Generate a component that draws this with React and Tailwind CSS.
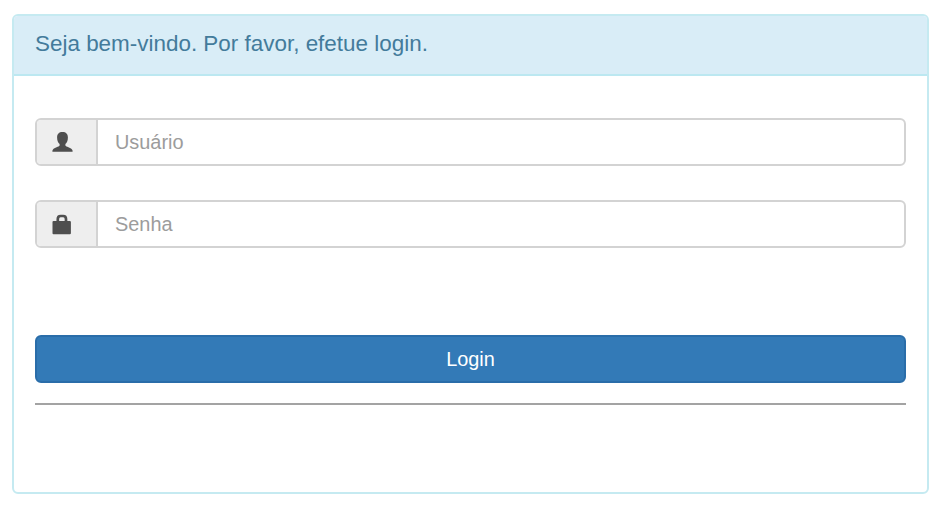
function UserIcon() {
  return (
    <svg width="21" height="21" viewBox="0 0 21 21" fill="#4f4f4f" aria-hidden="true">
      <path d="M10.5 0C14 0 15.9 2 15.9 5.4C15.9 8.4 14.9 10.9 13.4 12V13.6C14 14.8 18.6 15.8 20 17.5C20.6 18.2 20.7 19 20.6 19.8H.4C.3 19 .4 18.2 1 17.5C2.4 15.8 7 14.8 7.6 13.6V12C6.1 10.9 5.1 8.4 5.1 5.4C5.1 2 7 0 10.5 0Z" />
    </svg>
  );
}

function LockIcon() {
  return (
    <svg width="21" height="21" viewBox="0 0 21 21" aria-hidden="true">
      <rect x=".5" y="6.9" width="18.4" height="13.4" rx="1" fill="#4f4f4f" />
      <path d="M5.8 8V5Q5.8 2 8.6 2H11.2Q14 2 14 5V8" fill="none" stroke="#4f4f4f" strokeWidth="2.7" />
    </svg>
  );
}

function Field({ icon, label, type }) {
  return (
    <div className="flex h-12 overflow-hidden rounded-md border-2 border-[#d3d3d3] bg-white">
      <div className="flex w-[61px] shrink-0 items-center border-r-2 border-[#d3d3d3] bg-[#eeeeee] pl-[15px]">
        {icon}
      </div>
      <input
        type={type}
        placeholder={label}
        aria-label={label}
        className="min-w-0 flex-1 bg-transparent pl-[17px] pt-0.5 text-[19.9px] text-[#555555] outline-none placeholder:text-[#9c9c9c]"
      />
    </div>
  );
}

export default function App() {
  return (
    <main className="h-[509px] w-full bg-white pr-[15px] pl-3 pt-3.5 font-['Liberation_Sans',Arial,sans-serif]">
      <section className="h-[480px] overflow-hidden rounded-md border-2 border-[#c5eaf1]">
        <header className="flex h-[60px] items-center border-b-2 border-[#bce8f1] bg-[#d9edf7] pb-0.5 pl-[21px]">
          <h1 className="text-[22.45px] leading-none text-[#437b9b]">Seja bem-vindo. Por favor, efetue login.</h1>
        </header>
        <form className="flex flex-col px-[21px] pt-[42px]" onSubmit={(e) => e.preventDefault()}>
          <Field icon={<UserIcon />} label="Usuário" type="text" />
          <div className="mt-[34px]">
            <Field icon={<LockIcon />} label="Senha" type="password" />
          </div>
          <button className="mt-[87px] h-12 rounded-md border-2 border-[#2a6da9] bg-[#337ab7] pt-0.5 text-[19.9px] text-white">
            Login
          </button>
          <hr className="mt-5 h-0.5 border-t-2 border-[#a3a3a3]" />
        </form>
      </section>
    </main>
  );
}
